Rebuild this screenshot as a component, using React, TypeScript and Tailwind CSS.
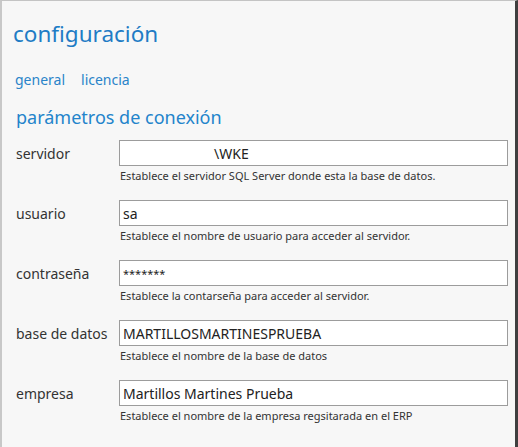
import { useState } from "react"

type Campo = {
    id: string
    label: string
    value: string
    ayuda: string
    small?: boolean
}

const campos: Campo[] = [
    { id: "servidor", label: "servidor", value: "                         \\WKE", ayuda: "Establece el servidor SQL Server donde esta la base de datos." },
    { id: "usuario", label: "usuario", value: "sa", ayuda: "Establece el nombre de usuario para acceder al servidor." },
    { id: "password", label: "contraseña", value: "*******", ayuda: "Establece la contarseña para acceder al servidor.", small: true },
    { id: "basedatos", label: "base de datos", value: "MARTILLOSMARTINESPRUEBA", ayuda: "Establece el nombre de la base de datos" },
    { id: "empresa", label: "empresa", value: "Martillos Martines Prueba", ayuda: "Establece el nombre de la empresa regsitarada en el ERP" },
]

export default function App() {

    const [tab, setTab] = useState("general")

    return (
        <main className="w-[518px] h-[447px] overflow-hidden bg-[#f7f7f7] border-t border-t-[#c4c4c4] border-l-2 border-l-[#c8c8c8] border-r-[3px] border-r-[#3f3f3f] font-['Noto_Sans',sans-serif] text-[#333]">
            <h1 className="pl-[11px] pt-[18px] text-[22.5px] leading-[30px] text-[#1f7cc5]">configuración</h1>

            <nav className="flex gap-[16px] pl-[13px] mt-[22px] text-[14px] leading-[18px] text-[#2a84c9]">
                <button onClick={() => setTab("general")} className={tab === "general" ? "" : "opacity-90"}>general</button>
                <button onClick={() => setTab("licencia")}>licencia</button>
            </nav>

            <h2 className="pl-[14px] mt-[16px] text-[18px] leading-[24px] text-[#2384cb]">parámetros de conexión</h2>

            <div className="flex flex-col gap-[17px] pl-[14px] mt-[11px]">
                {campos.map(c => (
                    <div key={c.id} className="flex">
                        <label htmlFor={c.id} className="w-[103px] h-[26px] flex items-center text-[14px] text-[#333]">{c.label}</label>
                        <div className="flex flex-col">
                            <input
                                id={c.id}
                                defaultValue={c.value}
                                className={`w-[389px] h-[26px] bg-white border border-[#9c9c9c] px-[3px] text-[#222] outline-none whitespace-pre ${c.small ? "text-[11px]" : "text-[14px]"}`}
                            />
                            <span className="ml-[1px] mt-[3px] text-[11px] leading-[14px] text-[#333]">{c.ayuda}</span>
                        </div>
                    </div>
                ))}
            </div>
        </main>
    )
}
